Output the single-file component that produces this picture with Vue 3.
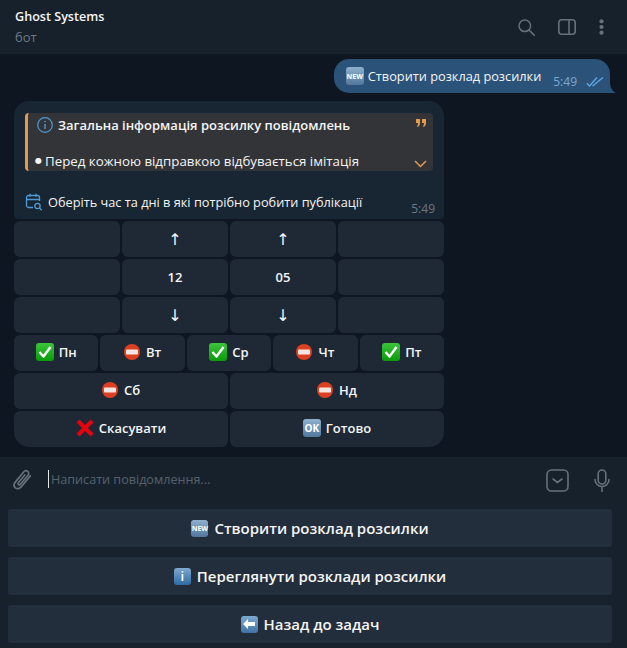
<template>
  <div class="window">
    <header class="topbar">
      <div class="peer">
        <div class="peer-name">Ghost Systems</div>
        <div class="peer-status">бот</div>
      </div>
      <div class="top-icons">
        <svg width="17" height="17" viewBox="0 0 17 17" fill="none" stroke="#66717c" stroke-width="1.5"><circle cx="6.8" cy="6.8" r="5.8"/><path d="M11 11l5.400 5.400" stroke-linecap="round"/></svg>
        <svg width="18" height="16" viewBox="0 0 18 16" fill="none" stroke="#66717c" stroke-width="1.600"><rect x=".8" y=".8" width="16.400" height="14.400" rx="3"/><path d="M11 .8v14.400"/></svg>
        <svg width="5" height="16" viewBox="0 0 5 16" fill="#66717c"><circle cx="2.500" cy="2.300" r="2.100"/><circle cx="2.500" cy="8" r="2.100"/><circle cx="2.500" cy="13.700" r="2.100"/></svg>
      </div>
    </header>

    <main class="history">
      <div class="out-row">
        <div class="out-bubble">
          <span class="emoji-box new"><span>NEW</span></span>
          <span class="out-text">Створити розклад розсилки</span>
          <span class="out-time">5:49</span>
          <svg class="ticks" width="18" height="11" viewBox="0 0 18 11" fill="none" stroke="#5ea6e6" stroke-width="1.400"><path d="M.8 7.200 3.500 10 11 1.500"/><path d="M6.500 10 17 1.500"/></svg>
          <svg class="tail" width="6" height="11" viewBox="0 0 6 11" fill="#2b5278"><path d="M0 0C0 5 2 9 6 11H0z"/></svg>
        </div>
      </div>

      <div class="in-group">
        <div class="in-bubble">
          <div class="quote">
            <div class="quote-title">
              <svg width="16" height="16" viewBox="0 0 16 16" fill="none" stroke="#4f9ad6" stroke-width="1.200"><circle cx="8" cy="8" r="7.300"/><path d="M8 7v5" stroke-width="1.400"/><circle cx="8" cy="4.600" r=".8" fill="#4f9ad6" stroke="none"/></svg>
              <b>Загальна інформація розсилку повідомлень</b>
            </div>
            <div class="quote-line"><span class="dot">●</span>Перед кожною відправкою відбувається імітація</div>
            <svg class="quote-mark" width="10" height="8" viewBox="0 0 10 8" fill="#e29a4e"><path d="M0 0h4v4C4 6 3 7.500 1.500 8L1 7c.7-.5 1-1.500 1-3H0zM6 0h4v4c0 2-1 3.500-2.500 4L7 7c.7-.5 1-1.500 1-3H6z"/></svg>
            <svg class="quote-chevron" width="13" height="8" viewBox="0 0 13 8" fill="none" stroke="#e29a4e" stroke-width="1.500"><path d="M1 1l5.500 5.500L12 1"/></svg>
          </div>
          <div class="in-text">
            <svg width="18" height="18" viewBox="0 0 18 18" fill="none" stroke="#4f9ad6" stroke-width="1.300"><path d="M8 14.500H3.500A2 2 0 0 1 1.500 12.500V4.500a2 2 0 0 1 2-2h9a2 2 0 0 1 2 2V8"/><path d="M1.500 6.500h13M5 .8v3M11 .8v3"/><circle cx="12.500" cy="13" r="2.600"/><path d="M14.500 15l2.200 2.200"/></svg>
            <span>Оберіть час та дні в які потрібно робити публікації</span>
            <span class="in-time">5:49</span>
          </div>
        </div>

        <div class="inline-kb">
          <div v-for="(row, i) in inlineRows" :key="i" class="kb-row">
            <div v-for="(btn, j) in row" :key="j" class="kb-btn" :class="{ 'has-icon': btn.icon }">
              <component :is="emojiOf(btn.icon)" v-if="btn.icon" />
              <span :class="{ arrow: btn.arrow }">{{ btn.text }}</span>
            </div>
          </div>
        </div>
      </div>
    </main>

    <div class="composer">
      <svg width="22" height="24" viewBox="0 0 24 26" fill="none" stroke="#66717c" stroke-width="1.800" stroke-linecap="round"><path d="M20 8.500 10 20.500c-1.800 2.200-4.500 2.500-6.300 1s-1.900-4-.1-6.200L12.700 4.300c1.300-1.500 3.200-1.800 4.500-.7s1.400 3 .1 4.500L9.200 17.600c-.6.800-1.500.9-2.100.4s-.6-1.400 0-2.200L14 7.500"/></svg>
      <div class="input"><i class="caret"></i><span>Написати повідомлення...</span></div>
      <svg width="23" height="23" viewBox="0 0 23 23" fill="none" stroke="#66717c" stroke-width="1.600"><rect x="1" y="1" width="21" height="21" rx="4.500"/><path d="M7 10l4.500 3.500L16 10" stroke-linecap="round"/></svg>
      <svg width="16" height="23" viewBox="0 0 16 23" fill="none" stroke="#66717c" stroke-width="1.600" stroke-linecap="round"><rect x="4.200" y="1" width="7.600" height="14" rx="3.800"/><path d="M1 10.500a7 7 0 0 0 14 0M8 17.500V22.500"/></svg>
    </div>

    <div class="reply-kb">
      <div class="reply-btn"><span class="emoji-box new big"><span>NEW</span></span>Створити розклад розсилки</div>
      <div class="reply-btn"><span class="emoji-box big info"><span>i</span></span>Переглянути розклади розсилки</div>
      <div class="reply-btn"><span class="emoji-box big back"><svg width="12" height="10" viewBox="0 0 12 10" fill="#fff"><path d="M0 5l5-5v3h7v4H5v3z"/></svg></span>Назад до задач</div>
    </div>
  </div>
</template>

<script setup>
import { h } from 'vue'

const IconCheck = () => h('span', { class: 'emoji-check' }, [
  h('svg', { width: 14, height: 12, viewBox: '0 0 14 12', fill: 'none', stroke: '#fff', 'stroke-width': 2.4 }, [h('path', { d: 'M1.500 6 5.500 10.500 12.500 1' })])
])
const IconNo = () => h('svg', { class: 'emoji-no', width: 16, height: 16, viewBox: '0 0 16 16' }, [
  h('circle', { cx: 8, cy: 8, r: 8, fill: '#dc3f22' }),
  h('rect', { x: 2, y: 5.500, width: 12, height: 5, rx: 1, fill: '#f2e6e2' })
])
const IconCross = () => h('svg', { width: 18, height: 18, viewBox: '0 0 18 18', stroke: '#e8000d', 'stroke-width': 4 }, [h('path', { d: 'M2 2l14 14M16 2 2 16' })])
const IconOk = () => h('span', { class: 'emoji-box ok' }, [h('span', 'OK')])

const icons = { check: IconCheck, no: IconNo, cross: IconCross, ok: IconOk }
const emojiOf = (name) => icons[name]

const inlineRows = [
  [{ text: '' }, { text: '↑', arrow: true }, { text: '↑', arrow: true }, { text: '' }],
  [{ text: '' }, { text: '12' }, { text: '05' }, { text: '' }],
  [{ text: '' }, { text: '↓', arrow: true }, { text: '↓', arrow: true }, { text: '' }],
  [
    { icon: 'check', text: 'Пн' },
    { icon: 'no', text: 'Вт' },
    { icon: 'check', text: 'Ср' },
    { icon: 'no', text: 'Чт' },
    { icon: 'check', text: 'Пт' }
  ],
  [{ icon: 'no', text: 'Сб' }, { icon: 'no', text: 'Нд' }],
  [{ icon: 'cross', text: 'Скасувати' }, { icon: 'ok', text: 'Готово' }]
]
</script>

<style>
html, body { margin: 0; background: #0e1621; }
</style>

<style scoped>
.window { width: 627px; height: 648px; display: flex; flex-direction: column; overflow: hidden; background: #0e1621; color: #f5f5f5; font-family: "Open Sans", "Noto Sans", sans-serif; font-size: 12.800px; }
.topbar { height: 54px; flex: none; box-sizing: border-box; padding: 8px 23px 0 15px; display: flex; justify-content: space-between; background: #17212b; }
.peer-name { font-size: 12.600px; font-weight: 600; line-height: 18px; }
.peer-status { font-size: 13px; line-height: 22px; color: #6d7883; }
.top-icons { display: flex; align-items: center; gap: 23px; height: 38px; }

.history { flex: 1; min-height: 0; box-sizing: border-box; padding: 5px 0 0 14px; display: flex; flex-direction: column; gap: 8px; }
.out-row { display: flex; justify-content: flex-end; padding-right: 17px; }
.out-bubble { position: relative; height: 34px; box-sizing: border-box; padding: 0 33px 0 12px; display: flex; align-items: center; gap: 4px; background: #2b5278; border-radius: 15px 15px 0 15px; }
.out-text { font-size: 12.750px; }
.out-time { font-size: 12px; color: #7da8d3; margin: 11px 0 0 8px; }
.ticks { position: absolute; right: 6px; bottom: 6px; }
.tail { position: absolute; right: -6px; bottom: 0; }

.emoji-box { display: inline-flex; align-items: center; justify-content: center; flex: none; width: 18px; height: 18px; border-radius: 3px; background: linear-gradient(#8fb0cf, #52779c); color: #fff; font-size: 7px; font-weight: 700; }
.emoji-box.big { width: 17px; height: 17px; margin-right: 6px; }
.emoji-box.info { font-size: 13px; font-weight: 600; background: linear-gradient(#7ea9cf, #2f6aa5); }
.emoji-box.back { background: linear-gradient(#7ea9cf, #3f73a5); }
.emoji-box.ok { font-size: 10px; }

.in-group { width: 430px; display: flex; flex-direction: column; gap: 2px; }
.in-bubble { height: 118px; box-sizing: border-box; padding: 12px 11px 0; background: #182533; border-radius: 15px 15px 4px 4px; }
.quote { position: relative; height: 58px; box-sizing: border-box; padding: 3px 0 0 9px; background: #333438; border-left: 3px solid #e29a4e; border-radius: 4px; }
.quote-title { display: flex; align-items: center; gap: 5px; height: 18px; font-size: 13px; }
.quote-title b { font-weight: 600; }
.quote-line { display: flex; align-items: center; margin: 18px 0 0 -2px; font-size: 13.300px; line-height: 18px; }
.dot { width: 10px; flex: none; font-family: "DejaVu Sans", sans-serif; font-size: 8px; }
.quote-mark { position: absolute; top: 6px; right: 7px; }
.quote-chevron { position: absolute; right: 6px; bottom: 3px; }
.in-text { position: relative; display: flex; align-items: center; gap: 5px; margin-top: 22px; font-size: 12.750px; }
.in-time { position: absolute; right: -2px; top: 7px; font-size: 12px; color: #6d7883; }

.inline-kb { display: flex; flex-direction: column; gap: 2px; }
.kb-row { display: flex; gap: 2px; }
.kb-btn { flex: 1 1 0; height: 36px; box-sizing: border-box; display: flex; align-items: center; justify-content: center; gap: 5px; background: #1f2936; border-radius: 6px; font-size: 13px; font-weight: 600; }
.kb-btn.has-icon { padding-bottom: 2px; }
.arrow { font-family: "DejaVu Sans", sans-serif; font-size: 16px; font-weight: 400; }
.kb-row:last-child .kb-btn:first-child { border-bottom-left-radius: 15px; }
.kb-row:last-child .kb-btn:last-child { border-bottom-right-radius: 15px; }
.emoji-check { display: inline-flex; align-items: center; justify-content: center; width: 18px; height: 18px; border-radius: 3px; background: linear-gradient(#3bc53b, #0a9a0a); }
.emoji-no { margin-right: 1px; }

.composer { height: 46px; flex: none; box-sizing: border-box; padding: 0 17px 0 12px; display: flex; align-items: center; gap: 14px; background: #17212b; }
.input { flex: 1; display: flex; align-items: center; margin-bottom: 2px; color: #56616c; font-size: 12.600px; }
.caret { width: 1px; height: 18px; margin-right: 2px; background: #e6e6e6; }
.composer svg:last-child { margin-left: 11px; }

.reply-kb { flex: none; height: 145px; box-sizing: border-box; padding: 6px 15px 0 8px; display: flex; flex-direction: column; gap: 10px; background: #17212b; }
.reply-btn { height: 38px; display: flex; align-items: center; justify-content: center; background: #232e3c; border-radius: 3px; font-size: 15px; font-weight: 600; }
</style>
